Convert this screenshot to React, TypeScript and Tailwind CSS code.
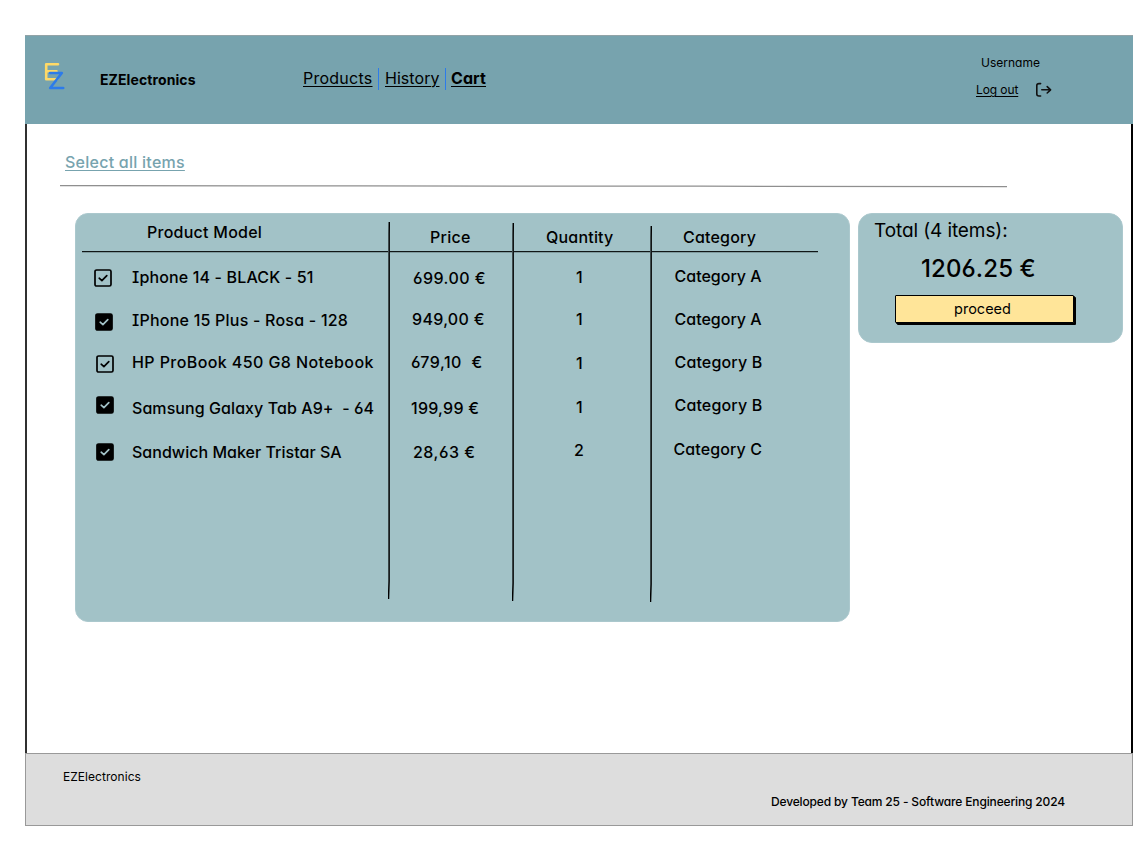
import React from "react";

type Item = {
  name: string;
  nameClass: string;
  rowClass: string;
  checkClass: string;
  filled: boolean;
};
type Cell = { text: string; className: string };

const items: Item[] = [
  { name: "Iphone 14 - BLACK - 51", nameClass: "tracking-[0.15px]", rowClass: "mt-[14px]", checkClass: "mt-[2px] ml-[13px]", filled: false },
  { name: "IPhone 15 Plus - Rosa - 128", nameClass: "tracking-[0.22px]", rowClass: "mt-[23px]", checkClass: "mt-[3px] ml-[14px]", filled: true },
  { name: "HP ProBook 450 G8 Notebook", nameClass: "tracking-[0.41px]", rowClass: "mt-[22px]", checkClass: "mt-[3px] ml-[15px]", filled: false },
  { name: "Samsung Galaxy Tab A9+  - 64", nameClass: "tracking-[0.07px]", rowClass: "mt-[26px]", checkClass: "-mt-[2px] ml-[15px]", filled: true },
  { name: "Sandwich Maker Tristar SA", nameClass: "tracking-[0.03px]", rowClass: "mt-[24px]", checkClass: "mt-[1px] ml-[15px]", filled: true },
];

const prices: Cell[] = [
  { text: "699.00 €", className: "mt-[15px] ml-[23px] tracking-[0.45px]" },
  { text: "949,00 €", className: "mt-[21px] ml-[22px] tracking-[0.3px]" },
  { text: "679,10  €", className: "mt-[23px] ml-[21px] tracking-[0.5px]" },
  { text: "199,99 €", className: "mt-[26px] ml-[21px] tracking-[0.25px]" },
  { text: "28,63 €", className: "mt-[24px] ml-[23px] tracking-[0.5px]" },
];

const quantities: Cell[] = [
  { text: "1", className: "mt-[14px] ml-[62px]" },
  { text: "1", className: "mt-[22px] ml-[62px]" },
  { text: "1", className: "mt-[24px] ml-[62px]" },
  { text: "1", className: "mt-[24px] ml-[62px]" },
  { text: "2", className: "mt-[23px] ml-[60px]" },
];

const categories: Cell[] = [
  { text: "Category A", className: "mt-[13px] ml-[22.5px]" },
  { text: "Category A", className: "mt-[23px] ml-[22.5px]" },
  { text: "Category B", className: "mt-[23px] ml-[22.5px] tracking-[0.15px]" },
  { text: "Category B", className: "mt-[23px] ml-[22.5px] tracking-[0.15px]" },
  { text: "Category C", className: "mt-[24px] ml-[21.5px] tracking-[0.1px]" },
];

function CheckBox({ filled }: { filled: boolean }) {
  return (
    <svg width="18" height="18" viewBox="0 0 18 18" fill="none" className="block">
      <rect x="1" y="1" width="16" height="16" rx="1.6" fill={filled ? "#000" : "none"} stroke="#000" strokeWidth="1.7" />
      <path d="M5.2 9.2 L7.9 11.6 L12.8 6.6" stroke={filled ? "#a2c2c7" : "#000"} strokeWidth="1.7" strokeLinecap="round" strokeLinejoin="round" />
    </svg>
  );
}

function Separator({ height, className }: { height: number; className: string }) {
  return (
    <svg width="2" height={height} viewBox={`0 0 2 ${height}`} className={`block shrink-0 ${className}`}>
      <path d={`M1.3 0 L1.15 12 L1.1 ${height - 18} L0.5 ${height}`} fill="none" stroke="#000" strokeWidth="1.5" />
    </svg>
  );
}

function Rule({ className = "" }: { className?: string }) {
  return <div className={`h-px shrink-0 bg-[#101616] shadow-[0_1px_0_0_#7f9a9e] ${className}`} />;
}

function Column({ title, titleClass, cells, className }: { title: string; titleClass: string; cells: Cell[]; className: string }) {
  return (
    <div className={`flex shrink-0 flex-col pt-[13px] ${className}`}>
      <div className={`h-5 ${titleClass}`}>{title}</div>
      <Rule className="mt-[4px] mb-px" />
      {cells.map((c, i) => (
        <div key={i} className={`h-5 ${c.className}`}>{c.text}</div>
      ))}
    </div>
  );
}

export default function App() {
  return (
    <div className="h-[842px] w-[1144px] overflow-hidden whitespace-pre bg-white pt-[35px] pl-[25px] font-['Inter','Liberation_Sans',sans-serif] text-base leading-5 font-[450] text-black [font-feature-settings:'cv11','cv08','cv03']">
      <div className="flex h-[791px] w-[1108px] flex-col">
        <header className="flex h-[89px] shrink-0 border-t border-t-[#92a3a7] bg-[#77a3ae] font-normal">
          <svg width="22" height="30" viewBox="0 0 22 30" fill="none" className="mt-[26px] ml-[19px] block" strokeLinecap="round" strokeLinejoin="round">
            <path d="M14 2.3 H2.2 V17.2 H13 M2.2 9.3 H12.5" stroke="#ffd966" strokeWidth="2.6" />
            <path d="M6 11 H17.8 L6.2 26 H19.2" stroke="#2d7bea" strokeWidth="2.6" />
          </svg>
          <div className="mt-[34px] ml-[34px] w-[203px] text-sm leading-5 font-bold tracking-[0.1px]">EZElectronics</div>
          <nav className="mt-[32px] flex w-[673px] leading-5">
            <a className="w-[75px] tracking-[0.25px] underline decoration-1 underline-offset-2">Products</a>
            <span className="h-[22px] w-px bg-[#2d7bea]" />
            <a className="ml-[6px] w-[60px] tracking-[0.05px] underline decoration-1 underline-offset-2">History</a>
            <span className="h-[22px] w-px bg-[#2d7bea]" />
            <a className="ml-[5px] font-bold tracking-[0.1px] underline decoration-1 underline-offset-2">Cart</a>
          </nav>
          <div className="mt-[17px] flex flex-col text-[12px] leading-5">
            <div className="ml-[5px] h-5">Username</div>
            <div className="mt-[7px] flex h-5">
              <a className="w-[59px] tracking-[-0.1px] underline decoration-1 underline-offset-2">Log out</a>
              <svg width="18" height="16" viewBox="0 0 18 16" fill="none" stroke="#111" strokeWidth="1.6" strokeLinecap="round" strokeLinejoin="round" className="mt-[2px] block">
                <path d="M5.6 1.6 H4 Q1.8 1.6 1.8 3.6 V12 Q1.8 14 4 14 H5.6" />
                <path d="M6.8 7.8 H15.4 M12.2 4.6 L15.6 7.8 L12.2 11" />
              </svg>
            </div>
          </div>
        </header>

        <main className="flex h-[629px] shrink-0 flex-col border-x-2 border-l-[#303030] border-r-black">
          <a className="mt-[28px] ml-[38px] h-5 self-start tracking-[0.25px] text-[#77a3ae] underline decoration-1 underline-offset-2">Select all items</a>
          <svg width="947" height="3" viewBox="0 0 947 3" className="mt-[13px] ml-[33px] block">
            <path d="M0 0.6 L300 0.9 L640 1.2 L947 1.7" fill="none" stroke="#8f8f8f" strokeWidth="1.3" />
          </svg>
          <div className="mt-[25px] flex items-start">
            <section className="ml-[48px] flex h-[409px] w-[775px] shrink-0 rounded-[13px] border border-[#abc8cd] bg-[#a2c2c7]">
              <div className="flex w-[312px] shrink-0 flex-col pt-[8px] pl-[6px]">
                <div className="ml-[65px] h-5 tracking-[0.25px]">Product Model</div>
                <Rule className="mt-[9px] mb-px" />
                {items.map((it) => (
                  <div key={it.name} className={`-ml-px flex h-5 ${it.rowClass}`}>
                    <div className="w-[51px] shrink-0">
                      <div className={it.checkClass}>
                        <CheckBox filled={it.filled} />
                      </div>
                    </div>
                    <div className={it.nameClass}>{it.name}</div>
                  </div>
                ))}
              </div>
              <Separator height={377} className="mt-[8px]" />
              <Column title="Price" titleClass="ml-[40px] tracking-[0.3px]" cells={prices} className="w-[122px]" />
              <Separator height={378} className="mt-[9px]" />
              <Column title="Quantity" titleClass="ml-[32px] tracking-[0.2px]" cells={quantities} className="w-[136px]" />
              <Separator height={376} className="mt-[12px]" />
              <Column title="Category" titleClass="ml-[31px] tracking-[0.2px]" cells={categories} className="w-[166px]" />
            </section>
            <section className="ml-[8px] flex h-[130px] w-[265px] shrink-0 flex-col rounded-[14px] border border-[#abc8cd] bg-[#a2c2c7]">
              <div className="mt-[5px] ml-[15px] h-6 text-[19px] leading-6 font-normal tracking-[-0.1px]">Total (4 items):</div>
              <div className="mt-[12px] ml-[62px] h-7 text-[24px] leading-7 tracking-[0.1px]">1206.25 €</div>
              <button className="mt-[12px] ml-[36px] flex h-[28px] w-[179px] items-center justify-center rounded-[1px] border border-black bg-[#ffe599] pr-[4px] text-[14.5px] leading-5 font-normal shadow-[1px_1px_0_0_#000,2px_2px_0_0_#000]">proceed</button>
            </section>
          </div>
        </main>

        <footer className="flex h-[73px] shrink-0 flex-col border border-[#999] bg-[#ddd] text-[12px] leading-5 font-normal">
          <div className="mt-[13px] ml-[37px] h-5 tracking-[0.05px]">EZElectronics</div>
          <div className="mt-[5px] ml-[745px] h-5 font-[450] tracking-[-0.15px]">Developed by Team 25 - Software Engineering 2024</div>
        </footer>
      </div>
    </div>
  );
}
